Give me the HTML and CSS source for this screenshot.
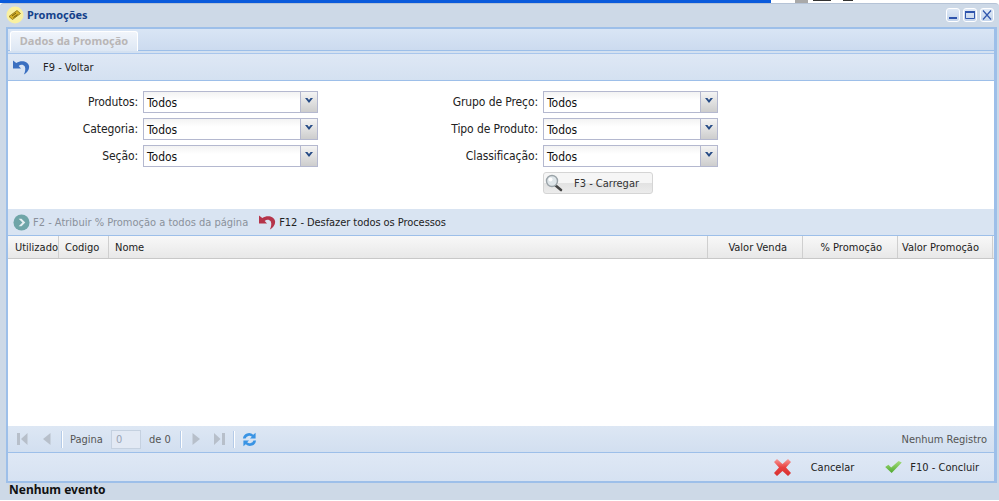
FILE: index.html
```html
<!DOCTYPE html>
<html lang="pt">
<head>
<meta charset="utf-8">
<title>Promoções</title>
<link rel="stylesheet" href="styles.css">
</head>
<body>
<div class="backdrop"><div class="taskbar"></div><div class="peek"><i class="peek-thumb"></i><i class="peek-mark"></i><i class="peek-mark short"></i></div></div>
<div class="window">
  <header class="titlebar">
    <svg class="app-icon" width="18" height="18" viewBox="0 0 18 18"><circle cx="9" cy="9" r="8.500" fill="#f9f0a0"/><path d="M3 10.500 11 4.500l3.500 3-8 6z" fill="#d8b328" stroke="#8a7012" stroke-width=".8"/><path d="M6 10l4-3M7.500 11.500l4-3" stroke="#6f5a0e" stroke-width="1"/></svg>
    <span class="title">Promoções</span>
    <div class="win-buttons">
      <button class="win-btn"><svg width="12" height="12" viewBox="0 0 12 12"><rect x="2" y="8" width="8" height="2" fill="#2f55ad"/></svg></button>
      <button class="win-btn"><svg width="12" height="12" viewBox="0 0 12 12"><path d="M1.500 2.500h9v7h-9z" fill="none" stroke="#2f55ad"/><rect x="1" y="2" width="10" height="2" fill="#2f55ad"/></svg></button>
      <button class="win-btn"><svg width="12" height="12" viewBox="0 0 12 12"><path d="M2 1.500l8 9M10 1.500l-8 9" stroke="#2f55ad" stroke-width="1.200" fill="none"/></svg></button>
    </div>
  </header>
  <div class="frame">
    <div class="tabbar"><div class="tab">Dados da Promoção</div></div>
    <div class="toolbar top-tools">
      <svg width="17" height="17" viewBox="0 0 18 17"><path d="M0 1v8.500h8.500L6 7C8 5 11 5.300 12.500 7.500c1 2.500.500 5.500-1 8.500 4-2 6-6 5.500-9C16 2 9 0 3.500 3.700z" fill="#3a6fc0"/></svg>
      <span class="tool-text">F9 - Voltar</span>
    </div>
    <form class="filters">
      <div class="filter-col">
        <div class="field"><label>Produtos:</label><div class="combo"><span>Todos</span><i class="arrow"></i></div></div>
        <div class="field"><label>Categoria:</label><div class="combo"><span>Todos</span><i class="arrow"></i></div></div>
        <div class="field"><label>Seção:</label><div class="combo"><span>Todos</span><i class="arrow"></i></div></div>
      </div>
      <div class="filter-col col-two">
        <div class="field"><label>Grupo de Preço:</label><div class="combo"><span>Todos</span><i class="arrow"></i></div></div>
        <div class="field"><label>Tipo de Produto:</label><div class="combo"><span>Todos</span><i class="arrow"></i></div></div>
        <div class="field"><label>Classificação:</label><div class="combo"><span>Todos</span><i class="arrow"></i></div></div>
        <div class="load-row"><button type="button" class="load-btn">
          <svg width="20" height="18" viewBox="0 0 20 18"><path d="M10 11l6 5" stroke="#444" stroke-width="2.600" stroke-linecap="round"/><circle cx="7" cy="7" r="5.500" fill="#dfe6ea" stroke="#9aa3a8" stroke-width="1.400"/><circle cx="5.500" cy="5.500" r="2" fill="#fff"/></svg>
          <span>F3 - Carregar</span></button></div>
      </div>
    </form>
    <div class="toolbar action-tools">
      <span class="action disabled">
        <svg width="17" height="17" viewBox="0 0 18 18"><circle cx="9" cy="9" r="8.500" fill="#6fa5a8"/><path d="M6 5h3l4 4-4 4H6l4-4z" fill="#e6f0f2"/></svg>
        <span>F2 - Atribuir % Promoção a todos da página</span>
      </span>
      <span class="action tight">
        <svg width="17" height="17" viewBox="0 0 18 17"><path d="M0 1v8.500h8.500L6 7C8 5 11 5.300 12.500 7.500c1 2.500.500 5.500-1 8.500 4-2 6-6 5.500-9C16 2 9 0 3.500 3.700z" fill="#b5344a"/></svg>
        <span>F12 - Desfazer todos os Processos</span>
      </span>
    </div>
    <div class="grid-head">
      <div class="th c-util">Utilizado</div>
      <div class="th c-cod">Codigo</div>
      <div class="th c-nome">Nome</div>
      <div class="th c-val right">Valor Venda</div>
      <div class="th c-val right">% Promoção</div>
      <div class="th c-last right">Valor Promoção</div>
    </div>
    <div class="grid-body"></div>
    <div class="pager">
      <svg class="pg" width="11" height="12" viewBox="0 0 11 12"><path d="M0 0h3v12H0zM10.500 0v12L4 6z" fill="#b7bfca"/></svg>
      <svg class="pg pg-prev" width="8" height="12" viewBox="0 0 8 12"><path d="M7.500 0v12L0 6z" fill="#b7bfca"/></svg>
      <i class="sep sep-a"></i>
      <span class="pg-label">Pagina</span>
      <span class="pg-input">0</span>
      <span class="pg-of">de 0</span>
      <i class="sep sep-b"></i>
      <svg class="pg" width="8" height="12" viewBox="0 0 8 12"><path d="M.5 0v12L8 6z" fill="#b7bfca"/></svg>
      <svg class="pg pg-last" width="11" height="12" viewBox="0 0 11 12"><path d="M0 0v12l6.500-6zM8 0h3v12H8z" fill="#b7bfca"/></svg>
      <i class="sep sep-c"></i>
      <svg class="pg" width="15" height="15" viewBox="0 0 16 16"><path d="M1 7a6.500 6.500 0 0 1 11-4L14.500.8V7H8.500l2-1.900A4.200 4.200 0 0 0 3.800 7z" fill="#3a94e4"/><path d="M15 9a6.500 6.500 0 0 1-11 4l-2.500 2.200V9h6l-2 1.900A4.200 4.200 0 0 0 12.200 9z" fill="#3a94e4"/></svg>
      <span class="pg-info">Nenhum Registro</span>
    </div>
    <div class="footer-tools">
      <span class="foot-action">
        <svg width="17" height="17" viewBox="0 0 17 17"><defs><linearGradient id="xred" x1="0" y1="0" x2="0" y2="1"><stop offset="0" stop-color="#f79a98"/><stop offset=".5" stop-color="#e8403f"/><stop offset="1" stop-color="#d63030"/></linearGradient></defs><path d="M0 3l3-3 5.500 5L14 0l3 3-5 5.500 5 5.500-3 3-5.500-5L3 17l-3-3 5-5.500z" fill="url(#xred)"/></svg>
        <span>Cancelar</span>
      </span>
      <span class="foot-action ok">
        <svg width="17" height="12" viewBox="0 0 18 13"><defs><linearGradient id="okgreen" x1="0" y1="0" x2="0" y2="1"><stop offset="0" stop-color="#a5dd7c"/><stop offset="1" stop-color="#4ea82e"/></linearGradient></defs><path d="M0 6.500 3.500 4 6.500 7 14.500 0 18 1.500 7 13z" fill="url(#okgreen)"/></svg>
        <span>F10 - Concluir</span>
      </span>
    </div>
  </div>
  <div class="statusbar">Nenhum evento</div>
</div>
</body>
</html>
```

FILE: styles.css
```css
* { box-sizing: border-box; }
html, body { margin: 0; padding: 0; }
body {
  width: 999px;
  height: 501px;
  overflow: hidden;
  background: #fff;
  font-family: "DejaVu Sans Condensed", "DejaVu Sans", sans-serif;
  font-stretch: condensed;
  font-size: 11px;
  color: #222;
  display: flex;
  flex-direction: column;
}
.backdrop { height: 3px; flex: none; display: flex; background: #fff; overflow: hidden; }
.taskbar { width: 771px; background: #0a5bdc; }
.peek { flex: 1; display: flex; padding-left: 24px; }
.peek-thumb { width: 13px; background: #a9a9a9; margin-right: 5px; }
.peek-mark { width: 18px; height: 1px; background: #333; margin-right: 12px; }
.peek-mark.short { width: 10px; }
.window {
  height: 497px;
  flex: none;
  display: flex;
  flex-direction: column;
  background: #cdd9e7;
  border-top: 1px solid #b5c3d6;
  border-radius: 4px 4px 0 0;
  padding: 0 2px 0 6px;
}
.titlebar { height: 23px; display: flex; align-items: center; padding-bottom: 2px; flex: none; }
.app-icon { margin-right: 3px; flex: none; }
.title { font-family: "Noto Sans", sans-serif; font-weight: 700; color: #15428b; font-size: 11px; }
.win-buttons { margin-left: auto; display: flex; gap: 3px; padding-right: 3px; }
.win-btn {
  width: 14px; height: 14px; padding: 0; border: 1px solid #fff; border-radius: 3px;
  background: linear-gradient(#dfe9f6, #c4d5ec); display: flex; align-items: center; justify-content: center;
}
.win-btn svg { flex: none; }
.frame {
  height: 456px;
  flex: none;
  display: flex;
  flex-direction: column;
  border: 2px solid #9dbfe9;
  border-right-width: 3px;
  background: #fff;
}
.tabbar {
  height: 22px; flex: none; padding: 2px 0 0 2px;
  background: linear-gradient(#d9e5f5, #ccdbef);
  border-bottom: 1px solid #9dbfe9;
  display: flex;
}
.tab {
  width: 128px; height: 20px; border: 1px solid #fff; border-bottom: 0; border-radius: 3px 3px 0 0;
  background: linear-gradient(#f1f5fb, #dde7f4);
  color: #b9b6b6; font-family: "Noto Sans", sans-serif; font-weight: 700; text-align: center; line-height: 17px;
}
.toolbar { display: flex; align-items: center; flex: none; background: linear-gradient(#dfe8f5, #d4e1f1); }
.top-tools { height: 30px; border-top: 2px solid #d4e1f1; box-shadow: inset 0 1px 0 #a9c6ec; padding: 1px 0 0 5px; border-bottom: 1px solid #9dbfe9; }
.tool-text { margin-left: 13px; }
.filters { height: 128px; flex: none; display: flex; padding-top: 10px; background: #fff; font-size: 12px; }
.filter-col { width: 310px; flex: none; }
.col-two { margin-left: 90px; }
.field { display: flex; align-items: center; height: 22px; margin-bottom: 5px; }
.field label { flex: 1; text-align: right; padding-right: 5px; white-space: nowrap; letter-spacing: -.1px; }
.combo {
  width: 175px; height: 22px; flex: none; display: flex; align-items: center;
  border: 1px solid #b4b8cf; background: linear-gradient(#f3f3f3, #fff 40%);
}
.combo span { flex: 1; padding: 2px 0 0 3px; color: #111; }
.arrow {
  width: 17px; height: 20px; border-left: 1px solid #b4b8cf;
  background: linear-gradient(#f4f4f4, #cdcdcd);
  position: relative;
}
.arrow::after {
  content: ""; position: absolute; left: 4px; top: 6px; width: 8px; height: 5px;
  background: #274c86; clip-path: polygon(0 0, 30% 0, 50% 40%, 70% 0, 100% 0, 50% 100%);
}
.load-row { display: flex; padding-left: 135px; }
.load-btn {
  width: 110px; height: 22px; padding: 0 0 0 1px; display: flex; align-items: center; gap: 9px;
  border: 1px solid #d5d5d5; border-radius: 3px; background: linear-gradient(#f6f6f6 50%, #e2e2e2 50%, #ececec);
  font: inherit; font-size: 11px; color: #333;
}
.action-tools { height: 27px; gap: 11px; padding-left: 5px; border-bottom: 1px solid #9dbfe9; background: #d9e4f2; }
.action { display: inline-flex; align-items: center; gap: 3px; }
.tight { letter-spacing: -.06px; }
.disabled { color: #8a919b; }
.grid-head { height: 23px; flex: none; display: flex; background: linear-gradient(#f8f8f8, #e8e8e8); border-bottom: 1px solid #c8c8c8; color: #222; }
.th { border-right: 1px solid #cfcfcf; line-height: 24px; padding-left: 6px; font-size: 11px; white-space: nowrap; overflow: hidden; }
.c-util { width: 51px; padding-left: 7px; }
.c-cod { width: 50px; }
.c-nome { flex: 1; }
.c-val { width: 95px; }
.c-last { width: 95px; margin-right: 1px; }
.th.right { text-align: right; padding: 0 15px 0 0; }
.th.c-last { padding-right: 13px; }
.grid-body { flex: 1; min-height: 0; background: #fff; }
.pager {
  height: 28px; flex: none; display: flex; align-items: center; padding: 0 7px 0 9px;
  background: linear-gradient(#dde7f4, #d2dff0); border-top: 1px solid #fff; border-bottom: 1px solid #9dbfe9; color: #555;
}
.pg { flex: none; }
.pg-prev { margin-left: 15px; }
.sep { width: 1px; height: 17px; background: #fff; flex: none; box-shadow: -1px 0 0 #b5cbe8; }
.sep-a { margin: 0 7px 0 11px; }
.sep-b { margin: 0 10px 0 10px; }
.sep-c { margin: 0 7px 0 9px; }
.pg-label { margin-right: 8px; }
.pg-input { width: 30px; height: 19px; border: 1px solid #c5d1e0; background: #e2e9f4; color: #9aa5b5; padding-left: 4px; line-height: 17px; margin-right: 8px; }
.pg-last { margin-left: 14px; }
.pg-info { margin-left: auto; }
.footer-tools {
  height: 28px; flex: none; display: flex; align-items: center; justify-content: flex-end; gap: 31px; padding-right: 15px;
  background: linear-gradient(#dfe8f5, #d6e2f2);
}
.foot-action { display: inline-flex; align-items: center; gap: 20px; }
.foot-action.ok { gap: 8px; }
.statusbar { height: 17px; flex: none; font-family: "Noto Sans", sans-serif; font-size: 12px; font-weight: 700; color: #111; line-height: 13px; padding-left: 3px; }
```
